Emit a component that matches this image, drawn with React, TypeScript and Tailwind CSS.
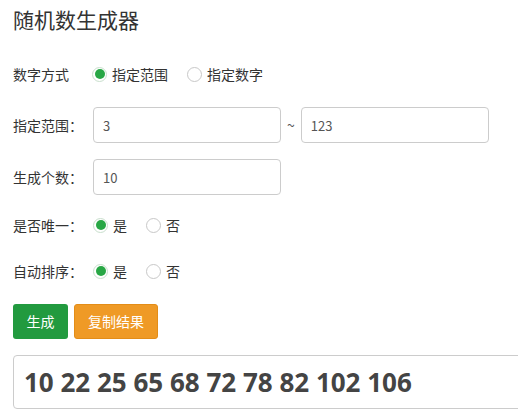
import { useState } from "react"

const font = { fontFamily: '"Noto Sans CJK SC", "Open Sans", sans-serif' }

function Radio({ checked, label, onClick }: { checked: boolean; label: string; onClick: () => void }) {
  return (
    <label className="flex items-center cursor-pointer mr-[19px]" onClick={onClick}>
      <span
        className={
          "w-[15px] h-[15px] rounded-full border flex items-center justify-center bg-white " +
          (checked ? "border-[#c9dfcd]" : "border-[#c8c8c8]")
        }
      >
        {checked && <span className="w-[10px] h-[10px] rounded-full bg-[#28a745]" />}
      </span>
      <span className="ml-[5px]">{label}</span>
    </label>
  )
}

export default function App() {
  const [mode, setMode] = useState<"range" | "list">("range")
  const [unique, setUnique] = useState(true)
  const [sorted, setSorted] = useState(true)
  const [min, setMin] = useState("3")
  const [max, setMax] = useState("123")
  const [count, setCount] = useState("10")
  const [result] = useState("10 22 25 65 68 72 78 82 102 106")

  return (
    <div className="w-[518px] h-[420px] overflow-hidden bg-white text-[#333] text-[14px] px-[13px] pt-[5px]" style={font}>
      <h1 className="text-[21px] leading-[28px] font-normal">随机数生成器</h1>

      {/* 数字方式 */}
      <div className="mt-[31px] h-[20px] flex items-center">
        <div className="w-[79px]">数字方式</div>
        <Radio checked={mode === "range"} label="指定范围" onClick={() => setMode("range")} />
        <Radio checked={mode === "list"} label="指定数字" onClick={() => setMode("list")} />
      </div>

      <div className="mt-[23px] h-[36px] flex items-center">
        <div className="w-[80px]">指定范围：</div>
        <input
          value={min}
          onChange={(e) => setMin(e.target.value)}
          className="w-[188px] h-[36px] border border-[#ccc] rounded-[4px] px-[9px] text-[13px] text-[#555] outline-none"
        />
        <span className="mx-[6px] text-[#555]">~</span>
        <input
          value={max}
          onChange={(e) => setMax(e.target.value)}
          className="w-[188px] h-[36px] border border-[#ccc] rounded-[4px] px-[9px] text-[13px] text-[#555] outline-none"
        />
      </div>

      <div className="mt-[16px] h-[36px] flex items-center">
        <div className="w-[80px]">生成个数：</div>
        <input
          value={count}
          onChange={(e) => setCount(e.target.value)}
          className="w-[188px] h-[36px] border border-[#ccc] rounded-[4px] px-[9px] text-[13px] text-[#555] outline-none"
        />
      </div>

      <div className="mt-[20px] h-[20px] flex items-center">
        <div className="w-[80px]">是否唯一：</div>
        <Radio checked={unique} label="是" onClick={() => setUnique(true)} />
        <Radio checked={!unique} label="否" onClick={() => setUnique(false)} />
      </div>

      <div className="mt-[26px] h-[20px] flex items-center">
        <div className="w-[80px]">自动排序：</div>
        <Radio checked={sorted} label="是" onClick={() => setSorted(true)} />
        <Radio checked={!sorted} label="否" onClick={() => setSorted(false)} />
      </div>

      {/* buttons */}
      <div className="mt-[23px] flex gap-[6px]">
        <button className="h-[35px] w-[55px] rounded-[3px] bg-[#229a3f] text-white text-[14px]">生成</button>
        <button className="h-[35px] w-[84px] rounded-[3px] bg-[#ef9a26] border border-[#e38d18] text-white text-[14px]">
          复制结果
        </button>
      </div>

      <div className="mt-[16px] h-[54px] w-[600px] border border-[#ccc] rounded-[4px] flex items-center pl-[10px]">
        <span className="text-[26px] font-bold text-[#444]" style={{ fontFamily: '"Open Sans", sans-serif' }}>
          {result}
        </span>
      </div>
    </div>
  )
}
